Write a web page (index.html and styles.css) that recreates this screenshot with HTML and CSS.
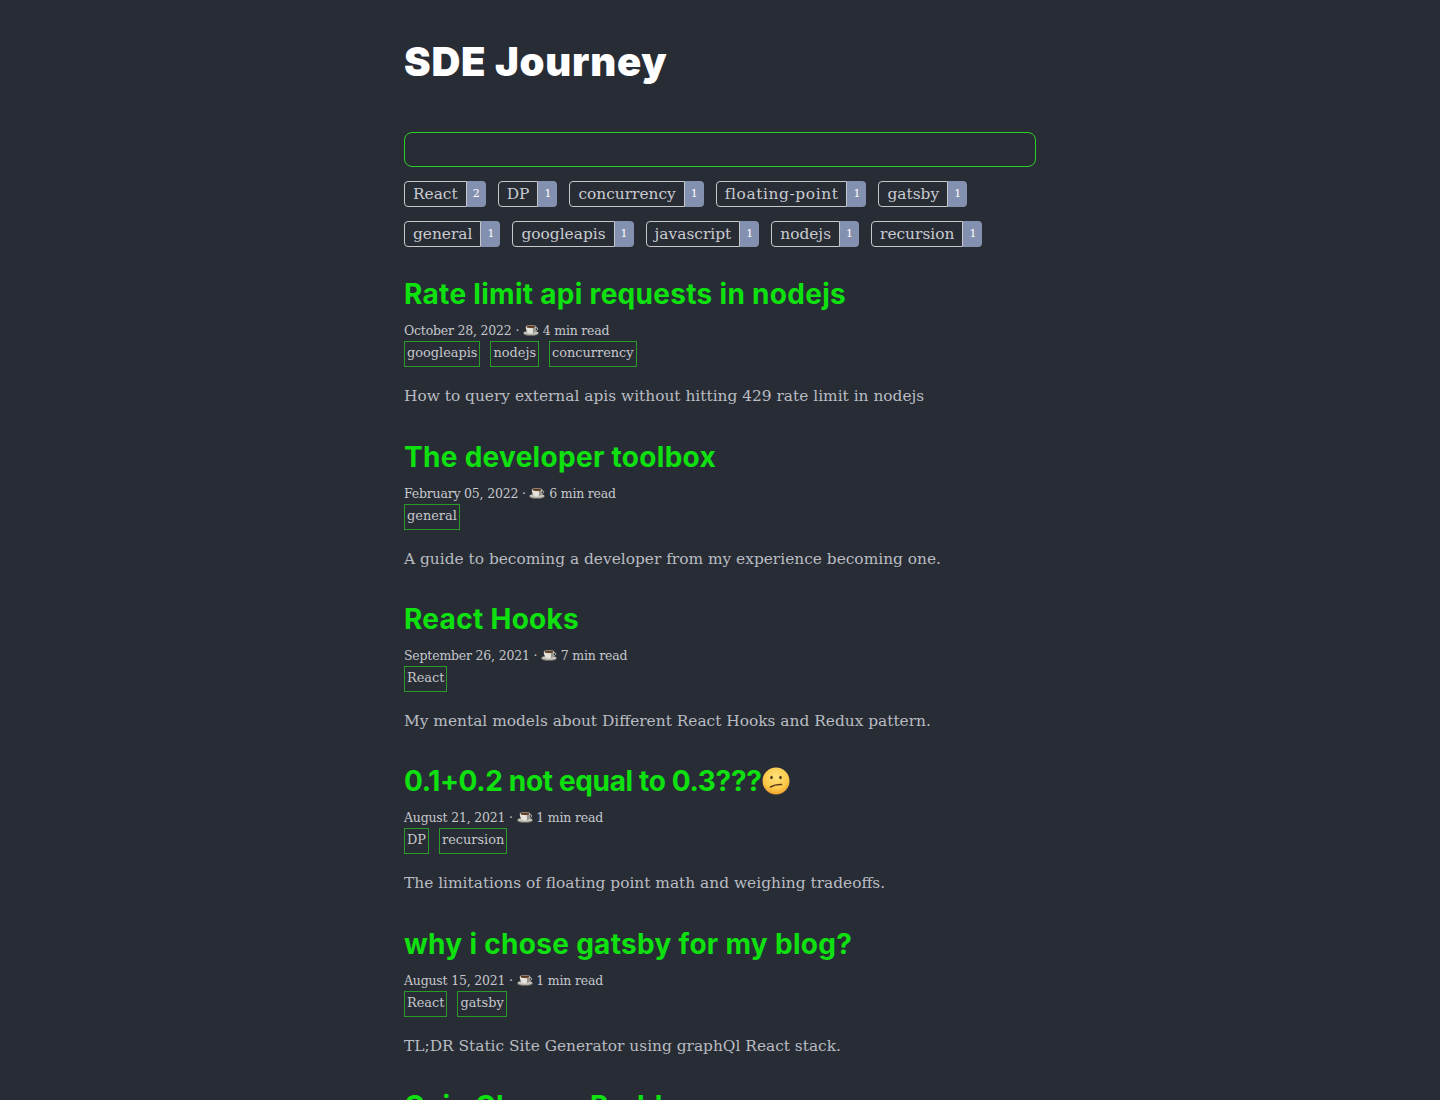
FILE: index.html
```html
<!DOCTYPE html>
<html lang="en">
<head>
<meta charset="utf-8">
<title>SDE Journey</title>
<link rel="stylesheet" href="styles.css">
</head>
<body>
<svg class="defs" width="0" height="0" aria-hidden="true">
  <defs>
    <symbol id="coffee" viewBox="0 0 16 12">
      <ellipse cx="8" cy="9.500" rx="7.800" ry="2.300" fill="#77746f"/>
      <ellipse cx="8" cy="8.800" rx="7.400" ry="1.900" fill="#c9c6bf"/>
      <path d="M2.800 2.600h10.400c0 3.800-1.400 6.800-5.200 6.800S2.800 6.400 2.800 2.600z" fill="#e6e3dc"/>
      <path d="M13 3.800c2.300-.5 2.700 2.500-.7 3.300" fill="none" stroke="#bdbab3" stroke-width="1"/>
      <path d="M9.500 3.400h3.700c0 3-1 5.400-3.600 5.900 .7-1.700 .4-3.900-.1-5.900z" fill="#9a9791"/>
      <ellipse cx="8" cy="2.600" rx="5.200" ry="1.700" fill="#c9c6bf"/>
      <ellipse cx="8" cy="2.700" rx="4.400" ry="1.200" fill="#5e3c22"/>
    </symbol>
  </defs>
</svg>
<main class="page">
  <h1 class="site-title">SDE Journey</h1>
  <input class="search" type="text" aria-label="Search">
  <div class="filters">
    <a class="filter"><span class="filter-name">React</span><span class="filter-count">2</span></a>
    <a class="filter"><span class="filter-name">DP</span><span class="filter-count">1</span></a>
    <a class="filter"><span class="filter-name">concurrency</span><span class="filter-count">1</span></a>
    <a class="filter"><span class="filter-name filter-name-wide">floating-point</span><span class="filter-count">1</span></a>
    <a class="filter"><span class="filter-name">gatsby</span><span class="filter-count">1</span></a>
    <a class="filter"><span class="filter-name">general</span><span class="filter-count">1</span></a>
    <a class="filter"><span class="filter-name">googleapis</span><span class="filter-count">1</span></a>
    <a class="filter"><span class="filter-name">javascript</span><span class="filter-count">1</span></a>
    <a class="filter"><span class="filter-name">nodejs</span><span class="filter-count">1</span></a>
    <a class="filter"><span class="filter-name">recursion</span><span class="filter-count">1</span></a>
  </div>

  <article class="post">
    <h2 class="post-title">Rate limit api requests in nodejs</h2>
    <div class="meta">October 28, 2022 · <svg class="cup"><use href="#coffee"/></svg> 4 min read</div>
    <div class="tags"><span class="tag">googleapis</span><span class="tag">nodejs</span><span class="tag">concurrency</span></div>
    <p class="excerpt">How to query external apis without hitting 429 rate limit in nodejs</p>
  </article>

  <article class="post">
    <h2 class="post-title">The developer toolbox</h2>
    <div class="meta">February 05, 2022 · <svg class="cup"><use href="#coffee"/></svg> 6 min read</div>
    <div class="tags"><span class="tag">general</span></div>
    <p class="excerpt">A guide to becoming a developer from my experience becoming one.</p>
  </article>

  <article class="post">
    <h2 class="post-title">React Hooks</h2>
    <div class="meta">September 26, 2021 · <svg class="cup"><use href="#coffee"/></svg> 7 min read</div>
    <div class="tags"><span class="tag">React</span></div>
    <p class="excerpt">My mental models about Different React Hooks and Redux pattern.</p>
  </article>

  <article class="post">
    <h2 class="post-title post-title-numeric">0.1+0.2 not equal to 0.3???<svg class="face" viewBox="0 0 28 28" aria-hidden="true">
      <defs><radialGradient id="skin" cx="50%" cy="35%" r="65%"><stop offset="0" stop-color="#ffe27c"/><stop offset="0.7" stop-color="#fcc848"/><stop offset="1" stop-color="#f0a030"/></radialGradient></defs>
      <circle cx="14" cy="14" r="13.500" fill="url(#skin)"/>
      <ellipse cx="9.500" cy="10.500" rx="1.300" ry="1.700" fill="#5b3a1c"/>
      <ellipse cx="18.500" cy="10.500" rx="1.300" ry="1.700" fill="#5b3a1c"/>
      <path d="M8.500 20c3-1.800 7.500-2.600 11-2.400" fill="none" stroke="#5b3a1c" stroke-width="1.500" stroke-linecap="round"/>
    </svg></h2>
    <div class="meta">August 21, 2021 · <svg class="cup"><use href="#coffee"/></svg> 1 min read</div>
    <div class="tags"><span class="tag">DP</span><span class="tag">recursion</span></div>
    <p class="excerpt">The limitations of floating point math and weighing tradeoffs.</p>
  </article>

  <article class="post">
    <h2 class="post-title">why i chose gatsby for my blog?</h2>
    <div class="meta">August 15, 2021 · <svg class="cup"><use href="#coffee"/></svg> 1 min read</div>
    <div class="tags"><span class="tag">React</span><span class="tag">gatsby</span></div>
    <p class="excerpt">TL;DR Static Site Generator using graphQl React stack.</p>
  </article>

  <article class="post">
    <h2 class="post-title">Coin Change Problem</h2>
  </article>
</main>
</body>
</html>
```
FILE: styles.css
```css
html, body {
  margin: 0;
  height: 1100px;
  overflow: hidden;
  background: #282c35;
}
body {
  font-family: "DejaVu Serif", "Liberation Serif", serif;
  color: #c6c8cc;
}
.defs { position: absolute; }
.page {
  width: 632px;
  margin: 0 auto;
  padding-top: 42px;
}
.site-title {
  margin: 0 0 50px;
  font: 900 40px/40px Inter, "Liberation Sans", sans-serif;
  letter-spacing: 0.75px;
  color: #fff;
}
.search {
  display: block;
  box-sizing: border-box;
  width: 100%;
  height: 35px;
  margin: 0 0 14px;
  background: transparent;
  border: 1px solid #2ad02a;
  border-radius: 8px;
}
.filters {
  display: flex;
  flex-wrap: wrap;
  gap: 14px 12px;
  margin-bottom: 30.2px;
}
.filter {
  display: flex;
  height: 26px;
}
.filter-name {
  box-sizing: border-box;
  padding: 0 8px;
  border: 1px solid #c6c8cc;
  border-radius: 4px 0 0 4px;
  font-size: 15.4px;
  line-height: 24px;
  color: #c9cbd0;
}
.filter-name-wide { letter-spacing: 0.6px; }
.filter-count {
  width: 19px;
  background: #8490b0;
  border-radius: 0 4px 4px 0;
  font-size: 11px;
  line-height: 26px;
  text-align: center;
  color: #fff;
}
.post { height: 162.4px; }
.post-title {
  margin: 0 0 9px;
  font: 700 28px/35px Inter, "Liberation Sans", sans-serif;
  letter-spacing: 0.3px;
  color: #0fe00f;
  white-space: nowrap;
}
.post-title-numeric { letter-spacing: -0.35px; }
.face {
  width: 28px;
  height: 28px;
  vertical-align: -4px;
}
.meta {
  font-size: 12.5px;
  line-height: 20px;
  letter-spacing: -0.2px;
  color: #c6c8cc;
}
.cup {
  width: 16px;
  height: 12px;
  vertical-align: -1px;
}
.tags {
  display: flex;
  gap: 10px;
}
.tag {
  box-sizing: border-box;
  height: 26px;
  padding: 0 2px;
  border: 1px solid #2b9a2b;
  font-size: 12.9px;
  line-height: 22px;
  color: #c6c8cc;
}
.excerpt {
  margin: 16px 0 0;
  font-size: 15.4px;
  line-height: 26px;
  color: #b9bcc2;
}
```
